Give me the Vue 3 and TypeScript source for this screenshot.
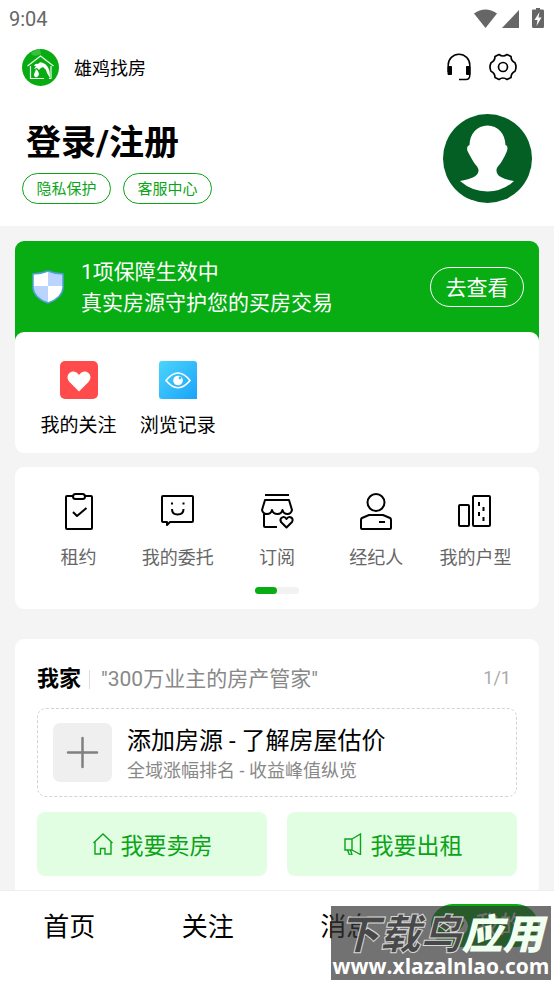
<script setup lang="ts">
interface Tool {
  label: string
  icon: 'lease' | 'entrust' | 'subscribe' | 'agent' | 'layout'
}

const tags: string[] = ['隐私保护', '客服中心']
const tools: Tool[] = [
  { label: '租约', icon: 'lease' },
  { label: '我的委托', icon: 'entrust' },
  { label: '订阅', icon: 'subscribe' },
  { label: '经纪人', icon: 'agent' },
  { label: '我的户型', icon: 'layout' },
]
const tabs: string[] = ['首页', '关注', '消息']
</script>

<template>
  <div class="page">
    <main class="content">
      <header class="head">
        <div class="status">
          <span>9:04</span>
          <svg class="status-icons" viewBox="0 0 74 22" aria-hidden="true">
            <g fill="#666">
              <path d="M2 5.500Q13.500-2.500 25 5.500L13.500 20Z" />
              <path d="M30 20L47 2V20Z" />
              <path d="M60.500 1.500H64V0H68V1.500H71Q72 1.500 72 3V18.500Q72 20 71 20H61.500Q60 20 60 18.500V3Q60 1.500 60.500 1.500Z" />
            </g>
            <path d="M67.500 4L62.500 12H65.500L64.500 18L69.500 9.500H66.500Z" fill="#fff" />
          </svg>
        </div>

        <div class="brand">
          <svg class="logo" viewBox="0 0 37 37" aria-hidden="true">
            <circle cx="18.500" cy="18.500" r="18.500" fill="#08ac12" />
            <path d="M9 4A18 18 0 0 1 18 0L19 5Q14 8 10 6Z" fill="#39bf40" />
            <path d="M8.500 17V29.500H22M29 17V29.500H27M5.500 17L18.500 7L31.500 17" fill="none" stroke="#e9ffe9" stroke-width="1.200" />
            <path d="M12 17Q13 14 16 15Q18 12 21 14Q24 15 25 17Q28 20 28 29L25 24Q24 20 21 18Q18 19 17 21L15 19L12 20L14 17Z" fill="#fff" />
            <path d="M14 20Q17 22 17 25Q16 29 13 28Q11 26 13 23Z" fill="#fff" />
          </svg>
          <span class="brand-name">雄鸡找房</span>
          <button class="icon-btn" type="button" aria-label="客服">
            <svg viewBox="0 0 28 28" fill="none" stroke="#000" stroke-width="1.500">
              <path d="M3.200 19V12A10.800 10.800 0 0 1 24.800 12V22Q24.800 26.500 21 26.500H14" />
              <path d="M3 13.500H6.500V21.500H3ZM21.500 13.500H25V21.500H21.500Z" fill="#000" stroke-width="1" />
            </svg>
          </button>
          <button class="icon-btn" type="button" aria-label="设置">
            <svg viewBox="0 0 28 28" fill="none" stroke="#000" stroke-width="1.700">
              <path d="M10 1.500Q14 4.500 18 1.500L22 3.500Q22 8 26 9.800Q28 14 26 18.200Q22 20 22 24.500L18 26.500Q14 23.500 10 26.500L6 24.500Q6 20 2 18.200Q0 14 2 9.800Q6 8 6 3.500Z" stroke-linejoin="round" />
              <circle cx="14" cy="14" r="4.500" />
            </svg>
          </button>
        </div>

        <div class="profile">
          <div>
            <h1>登录/注册</h1>
            <div class="tags">
              <button v-for="tag in tags" :key="tag" type="button" class="tag">{{ tag }}</button>
            </div>
          </div>
          <svg class="avatar" viewBox="0 0 89 89" aria-hidden="true">
            <circle cx="44.500" cy="44.500" r="44.500" fill="#045f24" />
            <path d="M44.500 11.500C34 12 27 19 26.500 31Q23 32 24.500 37Q27 42 30 47C32 51 36 53 35.500 57C35 63 27 65 17 67Q29 77.500 44.500 77.500Q60 77.500 71 67C61 65 54 63 53.500 57C53 53 57 51 59 47Q62 42 64 37Q65.500 32 62.500 31C62 19 55 12 44.500 11.500Z" fill="#fff" />
          </svg>
        </div>
      </header>

      <section class="guard">
        <div class="banner">
          <svg class="shield" viewBox="0 0 32 34" aria-hidden="true">
            <path d="M16 1Q23 4 31 4V18Q30 28 16 33Q2 28 1 18V4Q9 4 16 1Z" fill="#fff" />
            <path d="M16 1Q23 4 31 4V16H16ZM16 16V33Q2 28 1 18V16Z" fill="#bbd4ff" />
            <path d="M16 1Q23 4 31 4V18Q30 28 16 33Q2 28 1 18V4Q9 4 16 1Z" fill="none" stroke="#4fa0d8" stroke-width="1.500" />
          </svg>
          <p>1项保障生效中<br />真实房源守护您的买房交易</p>
          <button type="button" class="view">去查看</button>
        </div>
        <div class="grid shortcuts">
          <a href="#follow">
            <svg class="tile" viewBox="0 0 38 38" aria-hidden="true">
              <rect width="38" height="38" rx="5" fill="#ff4b4c" />
              <path d="M19 30.500L9.500 21C4.500 15 10 9.500 14 10.500Q17.500 11 19 14Q20.500 11 24 10.500C28 9.500 33.500 15 28.500 21Z" fill="#fff" />
            </svg>
            <span>我的关注</span>
          </a>
          <a href="#history">
            <svg class="tile" viewBox="0 0 38 38" aria-hidden="true">
              <defs>
                <linearGradient id="sky" x1="0" y1="0" x2="1" y2="1">
                  <stop offset="0" stop-color="#4bd5fb" />
                  <stop offset="1" stop-color="#1ba3fa" />
                </linearGradient>
              </defs>
              <path d="M3 0H35Q38 0 38 3V38H3Q0 38 0 35V3Q0 0 3 0Z" fill="url(#sky)" />
              <path d="M7 19.500Q19 4.500 31 19.500Q19 34 7 19.500Z" fill="none" stroke="#fff" stroke-width="1.700" />
              <circle cx="19" cy="19.500" r="4.800" fill="#fff" />
              <circle cx="21" cy="17" r="1.400" fill="#34bffa" />
            </svg>
            <span>浏览记录</span>
          </a>
        </div>
      </section>

      <section class="card tools">
        <div class="grid">
          <a v-for="tool in tools" :key="tool.label" :href="'#' + tool.icon">
            <svg viewBox="0 0 38 38" fill="none" stroke="#000" stroke-width="2" stroke-linejoin="round" aria-hidden="true">
              <template v-if="tool.icon === 'lease'">
                <path d="M13 3H7Q6 3 6 4V35Q6 36 7 36H31Q32 36 32 35V4Q32 3 31 3H25" />
                <rect x="13" y="1" width="12" height="5" rx="2.500" />
                <path d="M13 19L17 23L26.500 15" />
              </template>
              <template v-else-if="tool.icon === 'entrust'">
                <path d="M4 3H33Q34 3 34 4V28Q34 29 33 29H11L8 32V29H4Q3 29 3 28V4Q3 3 4 3Z" />
                <path d="M13 16Q13 21.500 18.500 21.500Q24.500 21.500 24.500 16" />
                <path d="M12 10.500H14M23.500 10.500H25.500" />
              </template>
              <template v-else-if="tool.icon === 'subscribe'">
                <path d="M7 2H31M7 7H31L34 17Q33 21 29.500 21Q25.500 21 24.500 17Q23.500 21 19.500 21Q15 21 14 17Q13 21 9 21Q5 21 4 17ZM6 21V33Q6 34 7 34H19" />
                <path d="M28.500 34.500L23 29C21 25 26 22 28.500 26C31 22 36.500 25 34 29Z" />
              </template>
              <template v-else-if="tool.icon === 'agent'">
                <circle cx="19" cy="9.500" r="8.500" />
                <path d="M12 22H26L33 25Q34 25.500 34 27V35Q34 36 33 36H5Q4 36 4 35V27Q4 25.500 5 25ZM22 29H28" />
              </template>
              <template v-else>
                <rect x="3" y="12" width="10" height="21" rx="1" />
                <rect x="17" y="3" width="17" height="30" rx="1" />
                <path d="M23 9V13M27.500 14V18M23 19V23M27.500 24V28" />
              </template>
            </svg>
            <span>{{ tool.label }}</span>
          </a>
        </div>
        <div class="pager"><i></i></div>
      </section>

      <section class="card home">
        <div class="home-head">
          <h2>我家</h2>
          <span class="slogan">"300万业主的房产管家"</span>
          <span class="count">1/1</span>
        </div>
        <button type="button" class="add">
          <svg viewBox="0 0 59 59" aria-hidden="true">
            <rect width="59" height="59" rx="7" fill="#efefef" />
            <path d="M29.500 15V44M15 29.500H44" stroke="#808080" stroke-width="2.500" stroke-linecap="round" />
          </svg>
          <span class="add-text">
            <strong>添加房源 - 了解房屋估价</strong>
            <small>全域涨幅排名 - 收益峰值纵览</small>
          </span>
        </button>
        <div class="actions">
          <button type="button">
            <svg viewBox="0 0 22 22" aria-hidden="true">
              <path d="M1.500 10L11 1L20.500 10M3 9V21H8.500V15.500H13V21H19V9" />
            </svg>
            我要卖房
          </button>
          <button type="button">
            <svg viewBox="0 0 22 22" aria-hidden="true">
              <path d="M3 6H10V17H3ZM10 6L18.500 1V21.500L10 17M5.500 17L7.500 22H10L8.500 17" />
            </svg>
            我要出租
          </button>
        </div>
      </section>
    </main>

    <nav class="tabbar">
      <a v-for="tab in tabs" :key="tab" href="#">{{ tab }}</a>
      <a href="#mine"><span class="current">
        <svg viewBox="0 0 24 24" aria-hidden="true">
          <circle cx="12" cy="12" r="10" fill="#fff" />
          <path d="M7 16Q15 16 17 8" fill="none" stroke="#08ac12" stroke-width="3" />
        </svg>我的</span></a>
      <div class="stamp">
        <div class="stamp-name"><span>下载鸟</span><b>应用</b></div>
        <div class="stamp-url">www.xlazalnlao.com</div>
      </div>
    </nav>
  </div>
</template>

<style>
body {
  margin: 0;
}
</style>

<style scoped>
.page {
  display: flex;
  flex-direction: column;
  height: 100vh;
  background: #f4f4f4;
  color: #000;
  font-family: Roboto, "Noto Sans CJK SC", sans-serif;
}
.page * {
  box-sizing: border-box;
}
svg {
  display: block;
  flex: none;
}
button {
  margin: 0;
  padding: 0;
  border: 0;
  background: none;
  color: inherit;
  font: inherit;
  cursor: pointer;
}
a {
  color: inherit;
  text-decoration: none;
}
h1, h2, p {
  margin: 0;
}
.content {
  flex: 1;
  min-height: 0;
  overflow: auto;
  scrollbar-width: none;
}
.head {
  height: 226px;
  background: #fff;
}
.status {
  display: flex;
  justify-content: space-between;
  align-items: center;
  height: 38px;
  padding: 0 8px 0 9px;
  color: #666;
  font-size: 20px;
}
.status-icons {
  width: 74px;
  height: 22px;
}
.brand {
  display: flex;
  align-items: center;
  height: 58px;
  padding: 0 37px 0 22px;
}
.logo {
  width: 37px;
  height: 37px;
}
.brand-name {
  flex: 1;
  padding-left: 15px;
  font-size: 18px;
}
.icon-btn {
  margin-left: 16px;
}
.icon-btn svg {
  width: 28px;
  height: 28px;
}
.profile {
  display: flex;
  justify-content: space-between;
  padding: 18px 22px 0;
}
h1 {
  padding: 3px 0 0 4px;
  font-size: 35px;
  line-height: 54px;
}
.tags {
  display: flex;
  gap: 12px;
  margin-top: 2px;
}
.tag {
  width: 89px;
  height: 31px;
  padding-bottom: 2px;
  border: 1px solid #0ba417;
  border-radius: 16px;
  color: #0ba417;
  font-size: 15px;
}
.avatar {
  width: 89px;
  height: 89px;
}
.guard {
  margin: 15px 15px 0;
  border-radius: 9px;
  background: linear-gradient(#07ad13, #07ad13) top / 100% 110px no-repeat;
}
.banner {
  display: flex;
  align-items: center;
  height: 91px;
  padding: 0 15px 0 17px;
  color: #fff;
}
.shield {
  width: 32px;
  height: 34px;
}
.banner p {
  flex: 1;
  padding: 2px 0 0 17px;
  font-size: 21px;
  line-height: 31px;
  white-space: nowrap;
}
.view {
  width: 94px;
  height: 40px;
  padding-bottom: 2px;
  border: 1px solid #fff;
  border-radius: 20px;
  font-size: 21px;
}
.grid {
  display: grid;
  grid-template-columns: repeat(5, 1fr);
  padding: 0 14px;
}
.grid a {
  display: flex;
  flex-direction: column;
  align-items: center;
  white-space: nowrap;
}
.grid svg {
  width: 38px;
  height: 38px;
}
.shortcuts {
  height: 121px;
  padding-top: 29px;
  border-radius: 9px;
  background: #fff;
}
.shortcuts span {
  margin-top: 13px;
  font-size: 19px;
  line-height: 28px;
}
.card {
  margin: 14px 15px 0;
  border-radius: 9px;
  background: #fff;
}
.tools {
  height: 142px;
  padding-top: 26px;
}
.tools span {
  margin-top: 13px;
  color: #666;
  font-size: 18px;
  line-height: 28px;
}
.pager {
  width: 44px;
  height: 7px;
  margin: 15px auto 0;
  border-radius: 4px;
  background: #f2f2f2;
}
.pager i {
  display: block;
  width: 50%;
  height: 100%;
  border-radius: 4px;
  background: #07ad13;
}
.home {
  margin-top: 30px;
  padding: 25px 22px 24px;
}
.home-head {
  display: flex;
  align-items: center;
  height: 30px;
}
h2 {
  padding-right: 8px;
  font-size: 22px;
  line-height: 30px;
}
.slogan {
  flex: 1;
  padding-left: 12px;
  background: linear-gradient(#ddd, #ddd) left center / 1px 19px no-repeat;
  color: #888;
  font-size: 21px;
  line-height: 30px;
}
.count {
  padding: 0 6px 3px 0;
  color: #aaa;
  font-size: 18px;
}
.add {
  display: flex;
  align-items: center;
  width: 100%;
  height: 89px;
  margin-top: 14px;
  padding: 0 15px;
  border: 1px dashed #d3d3d3;
  border-radius: 9px;
  text-align: left;
  white-space: nowrap;
}
.add svg {
  width: 59px;
  height: 59px;
}
.add-text {
  display: flex;
  flex-direction: column;
  padding: 4px 0 0 15px;
}
.add strong {
  font-size: 24px;
  font-weight: 400;
  line-height: 32px;
}
.add small {
  color: #888;
  font-size: 18px;
  line-height: 28px;
}
.actions {
  display: grid;
  grid-template-columns: 1fr 1fr;
  gap: 20px;
  margin-top: 15px;
}
.actions button {
  display: flex;
  align-items: center;
  justify-content: center;
  gap: 7px;
  height: 64px;
  border-radius: 8px;
  background: #e1fee3;
  color: #0ba417;
  font-size: 23px;
}
.actions svg {
  width: 22px;
  height: 22px;
  fill: none;
  stroke: #0ba417;
  stroke-width: 1.400;
}
.tabbar {
  position: relative;
  display: grid;
  grid-template-columns: repeat(4, 1fr);
  flex: none;
  height: 94px;
  padding-top: 13px;
  border-top: 1px solid #efefef;
  background: #fff;
  font-size: 26px;
}
.tabbar a {
  display: flex;
  justify-content: center;
  height: 43px;
  line-height: 47px;
}
.current {
  display: flex;
  align-items: center;
  justify-content: center;
  gap: 5px;
  width: 107px;
  border-radius: 22px;
  background: #07ad13;
  color: #fff;
  font-size: 24px;
  line-height: 43px;
}
.current svg {
  width: 24px;
  height: 24px;
}
.stamp {
  position: absolute;
  right: 3px;
  bottom: 4px;
  width: 220px;
  height: 74px;
  background: rgba(54, 54, 54, 0.7);
  color: #fff;
  text-align: center;
  white-space: nowrap;
}
.stamp-name {
  height: 48px;
  padding-top: 9px;
  font-size: 41px;
  font-weight: 900;
  font-style: italic;
  line-height: 41px;
}
.stamp-name span {
  color: #484848;
  -webkit-text-stroke: 1px #d8d8d8;
}
.stamp-name b {
  color: #f0fff0;
  font-weight: 900;
}
.stamp-url {
  font-family: "Open Sans", "Noto Sans", sans-serif;
  font-size: 21px;
  font-weight: 700;
  line-height: 24px;
}
</style>
